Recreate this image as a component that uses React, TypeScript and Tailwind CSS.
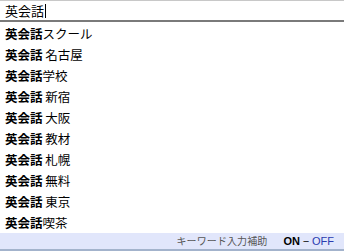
import React from "react";

const items: [string, string][] = [
  ["英会話", "スクール"],
  ["英会話", " 名古屋"],
  ["英会話", "学校"],
  ["英会話", " 新宿"],
  ["英会話", " 大阪"],
  ["英会話", " 教材"],
  ["英会話", " 札幌"],
  ["英会話", " 無料"],
  ["英会話", " 東京"],
  ["英会話", "喫茶"],
];

export default function App() {
  return (
    <div
      className="w-[344px] h-[251px] bg-white flex flex-col overflow-hidden"
      style={{ fontFamily: '"Noto Sans CJK JP", "Noto Sans", sans-serif' }}
    >
      <div className="h-[24px] border-t border-t-[#c8c8c8] border-b-2 border-b-[#7a7a7a] flex items-center pl-[5px] text-[13px] text-black leading-none">
        <span>英会話</span>
        <span className="w-px h-[14px] bg-black ml-px" />
      </div>
      <div className="flex flex-col pt-px">
        {items.map(([a, b], i) => (
          <div key={i} className="h-[21px] flex items-center pl-[5px] text-[12.5px] text-black leading-none whitespace-pre">
            <span className="font-bold">{a}</span>
            <span>{b}</span>
          </div>
        ))}
      </div>
      <div className="mt-auto h-[19px] bg-[#e1e6fb] border-b-2 border-b-[#a3b3cc] flex items-center justify-end pr-[10px] text-[11px] leading-none">
        <span className="text-[#555555] text-[10px] tracking-[0.1px]">キーワード入力補助</span>
        <span className="ml-[16px] font-bold text-black" style={{ fontFamily: '"Liberation Sans", sans-serif' }}>ON</span>
        <span className="mx-[3px] text-black">−</span>
        <span className="text-[#2a3bb0]" style={{ fontFamily: '"Liberation Sans", sans-serif' }}>OFF</span>
      </div>
    </div>
  );
}
